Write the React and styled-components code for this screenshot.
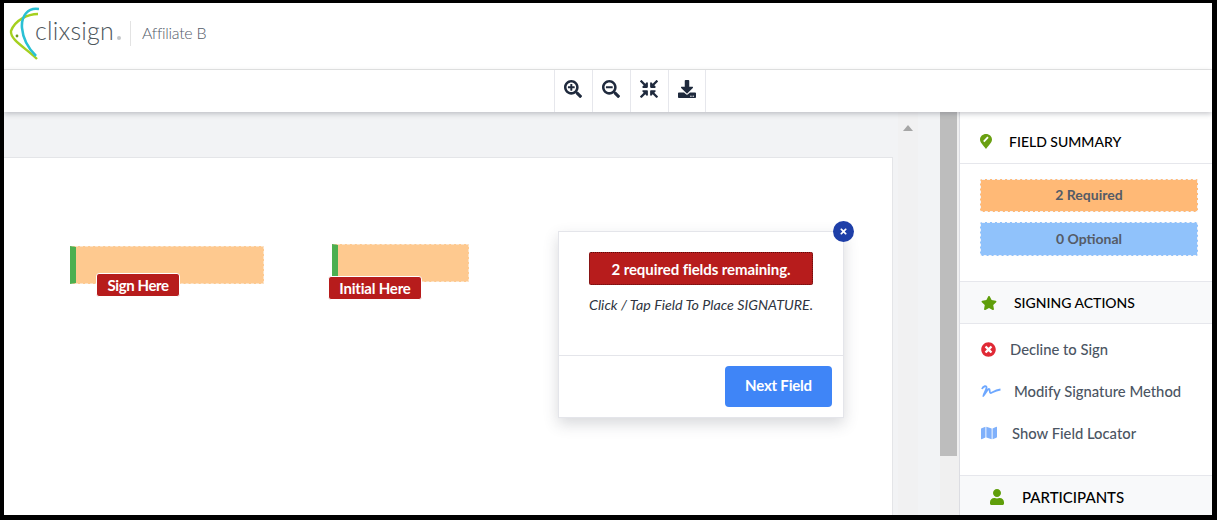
import React from 'react';
import styled, { createGlobalStyle } from 'styled-components';
import {
  FaSearchPlus,
  FaSearchMinus,
  FaCompressArrowsAlt,
  FaDownload,
  FaStar,
  FaTimesCircle,
  FaMap,
  FaUser,
  FaTimes,
} from 'react-icons/fa';

const GlobalStyle = createGlobalStyle`
  html, body {
    margin: 0;
    height: 520px;
    overflow: hidden;
    background: #000;
  }
  * { box-sizing: border-box; }
`;

const Frame = styled.div`
  margin: 3px 5px 0 4px;
  height: 512px;
  background: #fff;
  display: flex;
  flex-direction: column;
  overflow: hidden;
  font-family: Lato, "Liberation Sans", sans-serif;
`;

// HEADER //

const Header = styled.header`
  height: 67px;
  flex: none;
  display: flex;
  align-items: center;
  padding: 0 0 6px 4px;
  border-bottom: 1px solid #e6e6e6;
`;

const LogoText = styled.span`
  font-size: 25px;
  font-weight: 300;
  color: #4d565c;
  margin-left: -4px;
  letter-spacing: 0.2px;
  line-height: 1;
  padding-bottom: 5px;
`;

const LogoMark = styled.span`
  width: 4px;
  height: 4px;
  border-radius: 50%;
  background: #c4c7c9;
  margin: 9px 0 0 3px;
`;

const Divider = styled.span`
  width: 1px;
  height: 25px;
  background: #e3e3e3;
  margin: 0 11px 0 9px;
`;

const Affiliate = styled.span`
  font-size: 16px;
  font-weight: 300;
  color: #545c6a;
  letter-spacing: -0.3px;
  padding-bottom: 2px;
`;

// TOOLBAR //

const Toolbar = styled.div`
  height: 42px;
  flex: none;
  display: flex;
  padding-left: 550px;
  background: #fff;
  position: relative;
  z-index: 2;
  box-shadow: 0 2px 5px rgba(60, 64, 80, 0.28);
`;

const ToolButton = styled.button`
  width: 38px;
  height: 100%;
  padding: 0 1px 5px 0;
  border: 0;
  border-left: 1px solid #e6e7ec;
  border-right: ${(p) => (p.$last ? '1px solid #e6e7ec' : '0')};
  background: #fff;
  color: #1f2a3d;
  display: flex;
  align-items: center;
  justify-content: center;
  font-size: 18px;
`;

// MAIN //

const Main = styled.div`
  flex: 1;
  min-height: 0;
  display: flex;
`;

const Viewer = styled.div`
  flex: 1;
  display: flex;
  background: #f2f3f5;
  min-width: 0;
`;

const Page = styled.div`
  position: relative;
  width: 889px;
  margin-top: 45px;
  background: #fff;
  border-top: 1px solid #e4e5e8;
  border-right: 1px solid #e4e5e8;
  flex: none;
`;

const Field = styled.div`
  position: absolute;
  left: ${(p) => p.$x}px;
  top: ${(p) => p.$y}px;
  width: ${(p) => p.$w}px;
  height: 38px;
  background: #fec98f;
  border: 1px dashed #fbe3c8;
  border-left: 6px solid #4caf50;
`;

const FieldLabel = styled.div`
  position: absolute;
  left: ${(p) => p.$x}px;
  top: ${(p) => p.$y}px;
  width: ${(p) => p.$w}px;
  height: 24px;
  background: #b71c1c;
  border: 1px solid #fff;
  border-radius: 3px;
  color: #fff;
  font-size: 15px;
  font-weight: 700;
  letter-spacing: ${(p) => p.$track}px;
  display: flex;
  align-items: center;
  justify-content: center;
`;

const Popup = styled.div`
  position: absolute;
  left: 554px;
  top: 73px;
  width: 286px;
  height: 187px;
  background: #fff;
  border: 1px solid #e4e5ea;
  box-shadow: 0 6px 14px rgba(60, 64, 80, 0.2);
  display: flex;
  flex-direction: column;
`;

const CloseButton = styled.button`
  position: absolute;
  right: -11px;
  top: -11px;
  width: 21px;
  height: 21px;
  padding: 0;
  border: 0;
  border-radius: 50%;
  background: #1e3fa8;
  color: #fff;
  font-size: 9px;
  display: flex;
  align-items: center;
  justify-content: center;
`;

const PopupBody = styled.div`
  height: 124px;
  padding-top: 20px;
  display: flex;
  flex-direction: column;
  align-items: center;
  border-bottom: 1px solid #e4e5ea;
`;

const Alert = styled.div`
  width: 224px;
  height: 33px;
  background: #b71c1c;
  border: 1px dotted #5a0c0c;
  border-radius: 2px;
  color: #fff;
  font-size: 15px;
  font-weight: 700;
  letter-spacing: -0.08px;
  display: flex;
  align-items: center;
  justify-content: center;
`;

const Hint = styled.p`
  margin: 11px 0 0;
  font-size: 14.25px;
  font-style: italic;
  color: #2f3542;
`;

const PopupFooter = styled.div`
  flex: 1;
  display: flex;
  justify-content: flex-end;
  padding: 10px 11px 0 0;
`;

const NextButton = styled.button`
  width: 107px;
  height: 41px;
  padding: 0 0 4px;
  border: 0;
  border-radius: 4px;
  background: #3f85f7;
  color: #fff;
  font-family: inherit;
  font-size: 15px;
  font-weight: 700;
  letter-spacing: -0.2px;
`;

const ArrowColumn = styled.div`
  width: 20px;
  margin-left: 5px;
  flex: none;
  background: #f1f1f2;
  display: flex;
  justify-content: center;
  padding-top: 13px;
`;

const ArrowUp = styled.span`
  width: 0;
  height: 0;
  border-left: 5px solid transparent;
  border-right: 5px solid transparent;
  border-bottom: 6px solid #a6a6a6;
`;

const Track = styled.div`
  width: 19px;
  margin-left: 22px;
  flex: none;
  background: #f0f0f0;
  padding-right: 2px;
`;

const Thumb = styled.div`
  height: 344px;
  background: #bdbdbd;
`;

// SIDEBAR //

const Sidebar = styled.aside`
  width: 253px;
  flex: none;
  background: #fff;
  border-left: 1px solid #dcdde2;
  display: flex;
  flex-direction: column;
`;

const SectionHead = styled.div`
  height: ${(p) => p.$h || 42}px;
  flex: none;
  display: flex;
  align-items: center;
  padding: ${(p) => p.$top || 0}px 0 0 ${(p) => p.$pad}px;
  gap: ${(p) => p.$gap}px;
  background: ${(p) => (p.$tint ? '#f8f9fa' : '#fff')};
  border-bottom: ${(p) => (p.$open ? '1px solid #e6e7ec' : '0')};
  border-top: ${(p) => (p.$tint ? '1px solid #e6e7ec' : '0')};
  color: #000;
  font-size: ${(p) => p.$size || 14}px;
  font-weight: 500;
`;

const Summary = styled.div`
  height: 117px;
  flex: none;
  padding: 15px 14px 0 20px;
  display: flex;
  flex-direction: column;
  gap: 10px;
`;

const Pill = styled.div`
  height: ${(p) => p.$h}px;
  padding-bottom: 2px;
  background: ${(p) => p.$bg};
  border: 1px dashed #f3f4f8;
  border-radius: 2px;
  color: #555b66;
  font-size: 14px;
  font-weight: 700;
  display: flex;
  align-items: center;
  justify-content: center;
`;

const Actions = styled.div`
  height: 151px;
  flex: none;
  padding: 4px 0 0 21px;
  display: flex;
  flex-direction: column;
`;

const Action = styled.div`
  height: 42px;
  flex: none;
  display: flex;
  align-items: center;
  gap: ${(p) => p.$gap}px;
  color: #4b5563;
  font-size: 14.8px;
  font-weight: 500;
`;

const LogoIcon = () => (
  <svg width="31" height="54" viewBox="0 0 31 54" fill="none">
    <path d="M30 8 C20 8 7 14 3 25 C2 34 18 42 29 53" stroke="#a5d01f" strokeWidth="2.4" />
    <path d="M31 3 C20 1 13 10 14 22 C15 34 22 44 28 50" stroke="#2ac0d4" strokeWidth="2.6" />
    <circle cx="9" cy="30" r="1.4" fill="#6f9a1c" />
  </svg>
);

const PinIcon = () => (
  <svg width="12" height="15" viewBox="0 0 12 15">
    <path d="M6 15 C3 11 0 8.5 0 5.6 C0 2.4 2.7 0 6 0 C9.3 0 12 2.4 12 5.6 C12 8.5 9 11 6 15 Z" fill="#6aa012" />
    <path d="M3.8 7.6 L8 3.2" stroke="#fff" strokeWidth="1.8" />
  </svg>
);

const SignatureIcon = () => (
  <svg width="20" height="12" viewBox="0 0 20 12" fill="none">
    <path
      d="M1 4 C2 1 6 0 5.5 3 C5 6 2.5 9 2.5 10.5 C4 9 6.5 4 8 4 C9.5 4 8 8 9.5 8 C11 8 13 5.5 19.5 4.5"
      stroke="#6ea8ff"
      strokeWidth="1.8"
    />
  </svg>
);

const App = () => {
  return (
    <>
      <GlobalStyle />
      <Frame>
        <Header>
          <LogoIcon />
          <LogoText>clixsign</LogoText>
          <LogoMark />
          <Divider />
          <Affiliate>Affiliate B</Affiliate>
        </Header>
        <Toolbar>
          <ToolButton aria-label="Zoom in"><FaSearchPlus /></ToolButton>
          <ToolButton aria-label="Zoom out"><FaSearchMinus /></ToolButton>
          <ToolButton aria-label="Fit"><FaCompressArrowsAlt /></ToolButton>
          <ToolButton aria-label="Download" $last><FaDownload /></ToolButton>
        </Toolbar>
        <Main>
          <Viewer>
            <Page>
              <Field $x={66} $y={88} $w={194} />
              <FieldLabel $x={92} $y={115} $w={84} $track={-0.4}>Sign Here</FieldLabel>
              <Field $x={328} $y={86} $w={137} />
              <FieldLabel $x={324} $y={118} $w={94} $track={-0.2}>Initial Here</FieldLabel>
              <Popup>
                <CloseButton aria-label="Close"><FaTimes /></CloseButton>
                <PopupBody>
                  <Alert>2 required fields remaining.</Alert>
                  <Hint>Click / Tap Field To Place SIGNATURE.</Hint>
                </PopupBody>
                <PopupFooter>
                  <NextButton>Next Field</NextButton>
                </PopupFooter>
              </Popup>
            </Page>
            <ArrowColumn><ArrowUp /></ArrowColumn>
            <Track><Thumb /></Track>
          </Viewer>
          <Sidebar>
            <SectionHead $h={52} $pad={20} $gap={17} $top={8} $open>
              <PinIcon />
              FIELD SUMMARY
            </SectionHead>
            <Summary>
              <Pill $h={33} $bg="#ffb976">2 Required</Pill>
              <Pill $h={34} $bg="#90c2fb">0 Optional</Pill>
            </Summary>
            <SectionHead $h={43} $pad={21} $gap={17} $tint $open>
              <FaStar color="#5f9e0a" size={16} />
              SIGNING ACTIONS
            </SectionHead>
            <Actions>
              <Action $gap={14}>
                <FaTimesCircle color="#e02935" size={15} />
                Decline to Sign
              </Action>
              <Action $gap={13}>
                <SignatureIcon />
                Modify Signature Method
              </Action>
              <Action $gap={15}>
                <FaMap color="#7fb0fb" size={16} />
                Show Field Locator
              </Action>
            </Actions>
            <SectionHead $pad={29} $gap={17} $size={15} $tint>
              <FaUser color="#5f9e0a" size={16} />
              PARTICIPANTS
            </SectionHead>
          </Sidebar>
        </Main>
      </Frame>
    </>
  );
};

export default App;
